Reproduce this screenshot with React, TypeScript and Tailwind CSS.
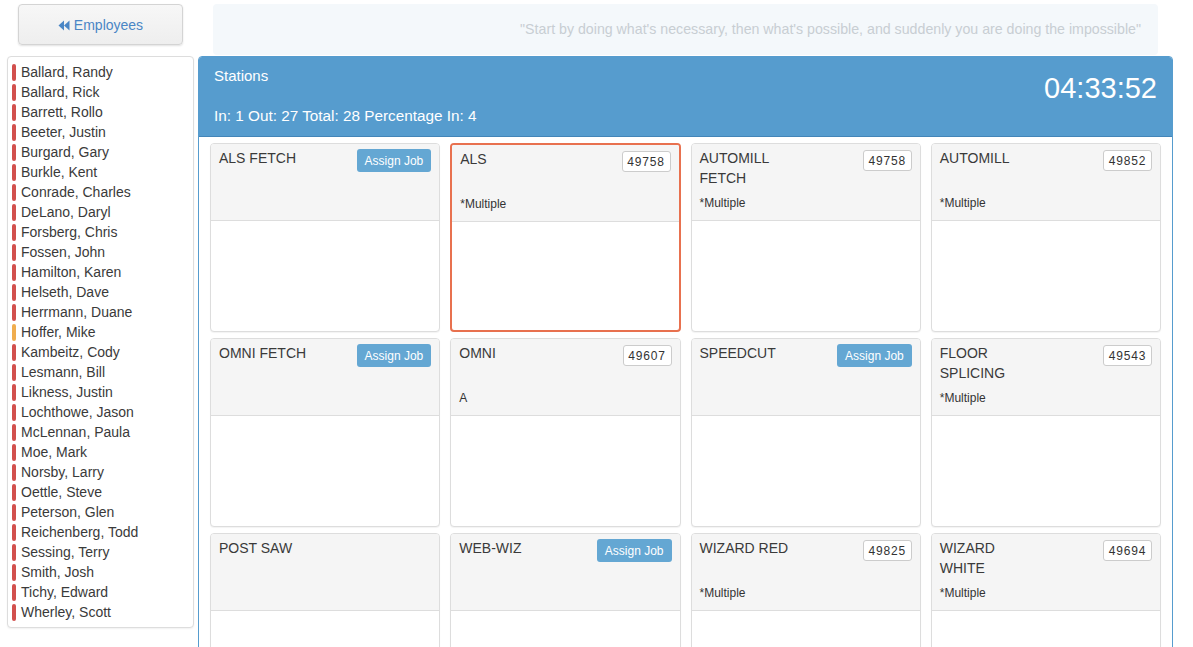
import React from "react";

type Employee = { name: string; status: "out" | "late" };

const EMPLOYEES: Employee[] = [
  "Ballard, Randy",
  "Ballard, Rick",
  "Barrett, Rollo",
  "Beeter, Justin",
  "Burgard, Gary",
  "Burkle, Kent",
  "Conrade, Charles",
  "DeLano, Daryl",
  "Forsberg, Chris",
  "Fossen, John",
  "Hamilton, Karen",
  "Helseth, Dave",
  "Herrmann, Duane",
  "Hoffer, Mike",
  "Kambeitz, Cody",
  "Lesmann, Bill",
  "Likness, Justin",
  "Lochthowe, Jason",
  "McLennan, Paula",
  "Moe, Mark",
  "Norsby, Larry",
  "Oettle, Steve",
  "Peterson, Glen",
  "Reichenberg, Todd",
  "Sessing, Terry",
  "Smith, Josh",
  "Tichy, Edward",
  "Wherley, Scott",
].map((name) => ({ name, status: name === "Hoffer, Mike" ? "late" : "out" }));

type Station = {
  name: string;
  job?: string;
  assign?: boolean;
  note?: string;
  active?: boolean;
};

const STATIONS: Station[] = [
  { name: "ALS FETCH", assign: true },
  { name: "ALS", job: "49758", note: "*Multiple", active: true },
  { name: "AUTOMILL FETCH", job: "49758", note: "*Multiple" },
  { name: "AUTOMILL", job: "49852", note: "*Multiple" },
  { name: "OMNI FETCH", assign: true },
  { name: "OMNI", job: "49607", note: "A" },
  { name: "SPEEDCUT", assign: true },
  { name: "FLOOR SPLICING", job: "49543", note: "*Multiple" },
  { name: "POST SAW" },
  { name: "WEB-WIZ", assign: true },
  { name: "WIZARD RED", job: "49825", note: "*Multiple" },
  { name: "WIZARD WHITE", job: "49694", note: "*Multiple" },
];

function BackIcon() {
  return (
    <svg width="12" height="11" viewBox="0 0 12 11" className="mr-[4px]">
      <path d="M6 0.5 L0.5 5.5 L6 10.5 Z" fill="#4a86c5" />
      <path d="M11.5 0.5 L6 5.5 L11.5 10.5 Z" fill="#4a86c5" />
    </svg>
  );
}

function StationCard({ station }: { station: Station }) {
  return (
    <div
      className={
        station.active
          ? "h-[189px] overflow-hidden rounded-[4px] border-2 border-[#e8714f] bg-white"
          : "h-[189px] overflow-hidden rounded-[4px] border border-[#dddddd] bg-white shadow-[0_1px_1px_rgba(0,0,0,0.05)]"
      }
    >
      <div className="border-b border-[#dddddd] bg-[#f5f5f5] px-[8px] pt-[4px] pb-[8px]">
        <div className="flex h-[40px] items-start justify-between">
          <div className="max-w-[98px] text-[14px] leading-[20px] text-[#3a3a3a]">
            {station.name}
          </div>
          {station.assign ? (
            <button className="mt-[1px] h-[23px] rounded-[3px] bg-[#64a7d3] px-[8px] text-[12px] text-white">
              Assign Job
            </button>
          ) : null}
          {station.job ? (
            <span className="mt-[2px] flex h-[21px] w-[49px] items-center justify-center rounded-[3px] border border-[#cccccc] bg-white text-[12px] tracking-[0.8px] text-[#333333]">
              {station.job}
            </span>
          ) : null}
        </div>
        <div className="mt-[7px] h-[17px] text-[12px] leading-[17px] text-[#333333]">
          {station.note}
        </div>
      </div>
    </div>
  );
}

export default function App() {
  return (
    <div
      className="flex w-[1193px] bg-white"
      style={{ fontFamily: '"Liberation Sans", Arial, sans-serif' }}
    >
      <aside className="w-[198px] shrink-0 pt-[4px] pl-[7px] pr-[4px]">
        <div className="px-[11px]">
          <button className="flex h-[41px] w-full items-center justify-center rounded-[4px] border border-[#d4d4d4] bg-gradient-to-b from-[#f7f7f7] to-[#eeeeee] pt-[2px] text-[14px] text-[#4a86c5] shadow-[0_1px_2px_rgba(0,0,0,0.12)]">
            <BackIcon />
            Employees
          </button>
        </div>
        <div className="mt-[11px] rounded-[4px] border border-[#dddddd] bg-white py-[5px] pl-[4px] shadow-[0_1px_2px_rgba(0,0,0,0.06)]">
          {EMPLOYEES.map((e) => (
            <div key={e.name} className="flex h-[20px] items-center text-[14px] text-[#3a3a3a]">
              <span
                className={
                  e.status === "late"
                    ? "mr-[5px] h-[17px] w-[4px] rounded-[2px] bg-[#f0ad4e]"
                    : "mr-[5px] h-[17px] w-[4px] rounded-[2px] bg-[#d2504d]"
                }
              />
              {e.name}
            </div>
          ))}
        </div>
      </aside>

      <main className="w-[975px] shrink-0">
        <div className="mx-[15px] mt-[4px] flex h-[51px] items-center justify-end rounded-[4px] bg-[#f4f8fb] pr-[17px] text-[14.2px] text-[#c8ced3]">
          "Start by doing what's necessary, then what's possible, and suddenly you are doing the impossible"
        </div>

        <section className="mt-[1px] overflow-hidden rounded-t-[4px] border border-[#569cce]">
          <div className="flex h-[80px] justify-between border-b border-[#4385b8] bg-[#569cce] px-[15px] text-white">
            <div>
              <div className="mt-[9px] text-[15px] leading-[20px]">Stations</div>
              <div className="mt-[20px] text-[15.3px] leading-[20px]">
                In: 1 Out: 27 Total: 28 Percentage In: 4
              </div>
            </div>
            <div className="mt-[13px] text-[29px] leading-[36px]">04:33:52</div>
          </div>
          <div className="grid grid-cols-4 gap-x-[10px] gap-y-[6px] bg-white px-[11px] pt-[6px] pb-[10px]">
            {STATIONS.map((s) => (
              <StationCard key={s.name} station={s} />
            ))}
          </div>
        </section>
      </main>
    </div>
  );
}
